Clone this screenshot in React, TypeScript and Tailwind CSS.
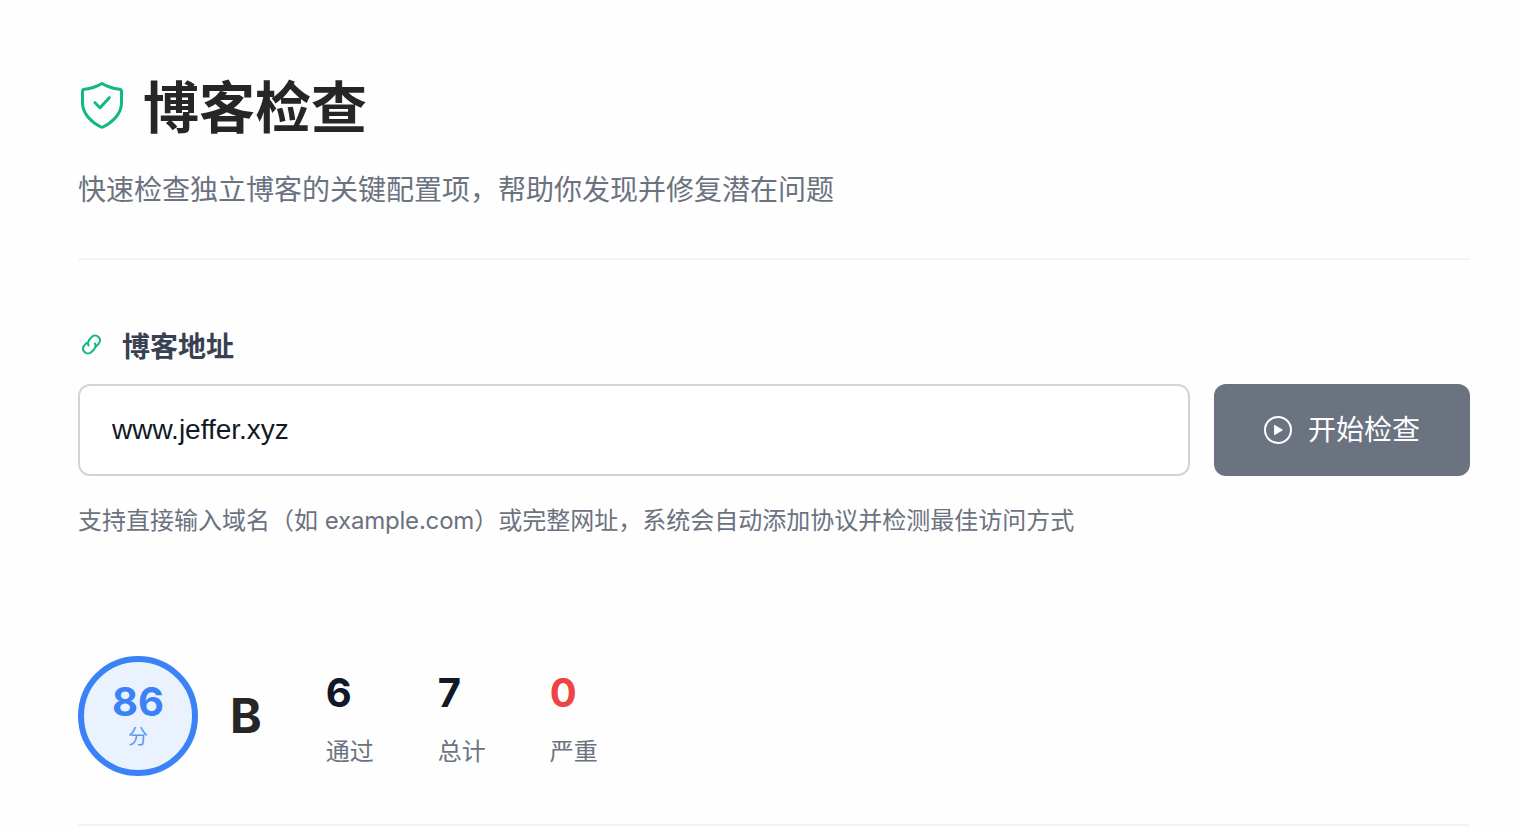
import React from 'react';

const stats = [
  { value: '6', label: '通过', color: 'text-[#111827]' },
  { value: '7', label: '总计', color: 'text-[#111827]' },
  { value: '0', label: '严重', color: 'text-[#ef4444]' },
];

const App: React.FC = () => {
  return (
    <div className="h-[828px] overflow-hidden bg-[#fefefe] pl-[78px] pr-[52px] pt-[74px] font-['Inter','Noto_Sans_CJK_SC',sans-serif]">
      <header className="border-b-2 border-[#f3f4f6] pb-[48px]">
        <div className="flex items-center gap-[19px]">
          <svg viewBox="0 0 44 52" className="-mt-[4px] ml-[2px] h-[52px] w-[44px] shrink-0 text-[#10b981]" fill="none" stroke="currentColor" strokeWidth={3} strokeLinecap="round" strokeLinejoin="round">
            <path d="M22 3.5C27 6.5 33 8.5 39.5 9.2C40.8 9.4 41.5 10 41.5 11.2V23C41.5 34 32 42.5 23 47C22.3 47.4 21.7 47.4 21 47C12 42.5 2.5 34 2.5 23V11.2C2.5 10 3.2 9.4 4.5 9.2C11 8.5 17 6.5 22 3.5Z" />
            <path d="M15 22.7L20 27.7L29.3 17.7" />
          </svg>
          <h1 className="text-[56px] leading-[68px] font-bold text-[#262626]">博客检查</h1>
        </div>
        <p className="mt-[28px] text-[28px] leading-[40px] text-[#6b7280]">
          快速检查独立博客的关键配置项，帮助你发现并修复潜在问题
        </p>
      </header>

      <section className="mt-[67px]">
        <div className="flex items-center gap-[18px]">
          <svg viewBox="8 5 22 22" className="-mt-[4px] ml-[4px] h-[22px] w-[22px] text-[#10b981]" fill="none" stroke="currentColor" strokeWidth={2} strokeLinecap="round" strokeLinejoin="round">
            <path d="M14.5 16.5C13.5 14 13.8 12.5 15.5 10.5L17.5 8.2C19.5 6 22.5 6 24.5 8C26.5 10 26.3 12.7 24.6 14.7L22 17.5" />
            <path d="M21 14.5C22 17 21.7 18.5 20 20.5L17.5 23C15.5 25 12.5 25 10.5 23C8.5 21 8.7 18.3 10.4 16.3L12.5 14" />
          </svg>
          <label className="text-[28px] leading-[40px] font-semibold text-[#374151]">博客地址</label>
        </div>
        <div className="mt-[17px] flex gap-[24px]">
          <input
            readOnly
            value="www.jeffer.xyz"
            className="h-[92px] flex-1 rounded-[12px] border-2 border-[#d1d5db] bg-white px-[32px] font-['Liberation_Sans',sans-serif] text-[28px] text-[#111827] outline-none"
          />
          <button className="flex h-[92px] w-[256px] items-center justify-center gap-[16px] rounded-[12px] bg-[#6b7280] text-[28px] font-normal text-white">
            <svg viewBox="0 0 28 28" className="h-[28px] w-[28px]" fill="none">
              <circle cx="14" cy="14" r="13" stroke="currentColor" strokeWidth="2" />
              <path d="M10.5 9.2L18.5 14L10.5 18.8Z" fill="currentColor" stroke="currentColor" strokeWidth="0.8" strokeLinejoin="round" />
            </svg>
            开始检查
          </button>
        </div>
        <p className="mt-[27px] text-[24px] leading-[36px] text-[#6b7280]">
          支持直接输入域名（如 <span className="tracking-[-0.2px]">example.com</span>）或完整网址，系统会自动添加协议并检测最佳访问方式
        </p>
      </section>

      <section className="mt-[117px] flex items-center gap-[32px] border-b-2 border-[#f3f4f6] pb-[48px]">
        <div className="flex h-[120px] w-[120px] flex-col items-center justify-center rounded-full border-[6px] border-[#3b82f6] bg-[#eaf2fe]">
          <span className="-mt-[2px] text-[40px] leading-[44px] font-bold text-[#3b82f6]">86</span>
          <span className="text-[20px] leading-[26px] text-[#3b82f6] opacity-80">分</span>
        </div>
        <span className="text-[48px] leading-[56px] font-bold text-[#262626]">B</span>
        <div className="ml-[32px] flex gap-[64px]">
          {stats.map((s) => (
            <div key={s.label} className="flex w-[48px] flex-col">
              <span className={`text-[40px] leading-[60px] font-bold ${s.color}`}>{s.value}</span>
              <span className="mt-[11px] text-[24px] leading-[36px] text-[#6b7280]">{s.label}</span>
            </div>
          ))}
        </div>
      </section>
    </div>
  );
};

export default App;
